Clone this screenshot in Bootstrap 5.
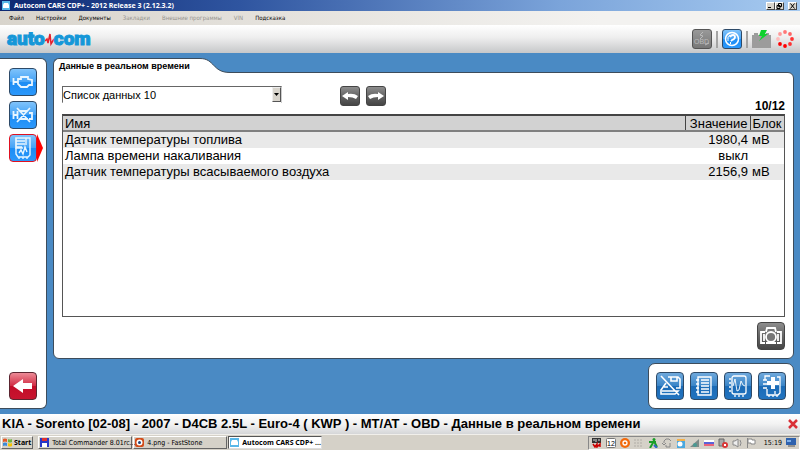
<!DOCTYPE html>
<html lang="ru">
<head>
<meta charset="utf-8">
<meta name="viewport" content="width=device-width, initial-scale=1">
<title>Autocom CARS CDP+</title>
<link href="https://cdn.jsdelivr.net/npm/bootstrap@5.3.0/dist/css/bootstrap.min.css" rel="stylesheet">
<style>
body{font-family:"Liberation Sans",sans-serif;font-size:12px;line-height:16px;color:#000;background:#4a8ac4}
button{padding:0;border:0;background:none;color:inherit}
svg{display:block;flex:none}
.ui-font{font-family:"DejaVu Sans Condensed","Noto Sans",sans-serif}
.ui-bold{font-family:"Noto Sans",sans-serif;font-weight:700}
.titlebar{height:11px;background:linear-gradient(90deg,#0d2871,#2f55a0 30%,#7ba4da 70%,#a6caf0);color:#fff;font-size:7px;line-height:11px;padding:0 3px 0 2px}
.win-btn{width:9px;height:8px;background:#d8d4cc;border:1px solid;border-color:#fff #444 #444 #fff}
.menubar{height:14px;background:linear-gradient(90deg,#d8d4cc,#f3f2f0 75%);font-size:6px;line-height:14px;padding-left:9px;gap:12px}
.menubar button:disabled{color:#96938e}
.toolbar{height:28px;background:linear-gradient(#fff,#eee 45%,#c6c7c9);padding:0 6px 0 7px}
.logo{font-family:"Roboto",sans-serif;font-weight:900;font-size:19px;line-height:26px;color:#1597d8;-webkit-text-stroke:1px #1597d8}
.rule{width:2px;height:17px;background:#a4a4a4}
.work{padding:5px 6px 5px 0;gap:6px}
.side{flex:none;width:47px;background:#fff;border:1px solid #3d4c5b;border-left:0;border-radius:0 6px 6px 0;padding:9px 0 8px 9px;gap:5px}
.tile{flex:none;width:28px;height:28px;border:1px solid #2d4a68;border-radius:4px;display:flex;align-items:center;justify-content:center;background:linear-gradient(#7fc3fb,#45a3f6 48%,#1c8df4 52%,#2b98fb)}
.tile-dark{background:linear-gradient(#6fa9dc,#3c86c8 48%,#1b6bb6 52%,#2274c0)}
.tile-grey{background:linear-gradient(#8d8d8d,#666 48%,#454545);border-color:#444}
.tile-off{background:linear-gradient(#999,#777);border-color:#555}
.tile-red{background:linear-gradient(#ec8a96,#d22f46 48%,#c20d28 52%,#c8142f);border-color:#5b2530}
.tile-on{border-color:#e01020}
.tile-sm{width:20px;height:20px;border-radius:3px}
.pointer{width:6px;height:28px;background:#f00;clip-path:polygon(0 0,100% 50%,0 100%)}
.tab-label{height:15px;background:#fff;border:1px solid #3d4c5b;border-width:1px 0 0 1px;border-radius:6px 0 0 0;width:147px;padding-left:5px;font-size:9px;line-height:14px;font-weight:700;white-space:nowrap}
.tab-row{margin-bottom:-1px;position:relative}
.sheet{background:#fff;border:1px solid #3d4c5b;border-radius:0 6px 6px 6px;padding:13px 8px 8px}
.panel-top{height:28px}
.pick{width:220px;height:17px;border:1px solid #777;border-color:#666 #ccc #ccc #666;position:relative}
.pick select{width:100%;height:15px;border:0;padding:0;font-size:11px;line-height:15px;appearance:none;background:#fff;color:#000}
.pick-arrow{position:absolute;right:0;top:0;bottom:0;width:9px;background:#d8d4cc;border:1px solid;border-color:#eee #555 #555 #eee;pointer-events:none}
.steps{gap:6px;margin-left:58px}
.grid-box{border:1px solid #555;border-top:2px solid #444}
.data{width:100%;table-layout:fixed;border-collapse:collapse;font-size:13px}
.data th{height:15px;line-height:13px;font-weight:400;background:#d2d2d2;border-bottom:2px solid #808080;padding:0 2px}
.data th+th{border-left:1px solid #444}
.data td{height:16px;line-height:16px;padding:0 2px}
.data tbody tr:nth-child(odd){background:#e9e9e9}
.c-val{width:65px}.c-unit{width:34px}
.snap{padding-top:5px}
.dock{background:#fff;border:1px solid #3d4c5b;border-radius:7px;padding:8px 7px;gap:6px}
.statusline{height:20px;background:linear-gradient(#fff,#f2f2f2 50%,#d5d6d8);font-size:13px;line-height:20px;font-weight:700;padding:0 2px}
.taskbar{height:16px;background:#d5d1c8;border-top:1px solid #f1efeb;font-size:7px;line-height:12px;gap:1px;padding:1px 0 1px 1px}
.task{height:13px;border:1px solid;border-color:#fff #666 #666 #fff;gap:2px;padding:0 1px;white-space:nowrap}
.task-w{width:94px;gap:3px}
.task-on{background:#fff;border-color:#555 #ddd #ddd #555}
.tray{border:1px solid;border-color:#888 #fff #fff #888;padding:0 3px;gap:4px}
</style>
<script src="https://cdn.jsdelivr.net/npm/bootstrap@5.3.0/dist/js/bootstrap.bundle.min.js"></script>
</head>
<body class="d-flex flex-column min-vh-100">
<header>
 <div class="titlebar d-flex align-items-center">
  <svg width="8" height="9" viewBox="0 0 8 9"><rect width="8" height="9" fill="#58b7e8"/><path d="M1 4l1-2h4l1 2v3H1z" fill="#fff"/></svg>
  <span class="ui-bold ps-1 flex-grow-1">Autocom CARS CDP+ - 2012 Release 3 (2.12.3.2)</span>
  <button class="win-btn" aria-label="Свернуть"><svg width="7" height="6"><path d="M1 4.500h3" stroke="#000"/></svg></button>
  <button class="win-btn me-1" aria-label="Развернуть"><svg width="7" height="6"><path d="M2.500 .5h3v3h-3zM1 2.500h3v3h-3z" stroke="#000" fill="none"/></svg></button>
  <button class="win-btn" aria-label="Закрыть"><svg width="7" height="6"><path d="M1.500 .5l4 5m0-5l-4 5" stroke="#000"/></svg></button>
 </div>
 <nav class="menubar ui-font d-flex"><button>Файл</button><button>Настройки</button><button>Документы</button><button disabled>Закладки</button><button disabled>Внешние программы</button><button disabled>VIN</button><button>Подсказка</button></nav>
 <div class="toolbar d-flex align-items-center">
  <div class="logo d-flex align-items-center me-auto"><span>auto</span><svg width="9" height="15" viewBox="0 0 9 15"><path d="M0 9l2-2 1 4 2-9 1 10 3-5" fill="none" stroke="#e6202c" stroke-width="1.500"/></svg><span>com</span></div>
  <div class="d-flex align-items-center gap-1">
   <button class="tile tile-sm tile-off" aria-label="OBD" disabled><svg width="18" height="18" viewBox="0 0 18 18" fill="none" stroke="#bbb"><path d="M10 2L7 5l3 1-3 3M12 15l4-2"/><text x="1" y="14" font-size="7" font-family="Liberation Sans" fill="#bbb" stroke="none">OBD</text></svg></button>
   <span class="rule"></span>
   <button class="tile tile-sm" aria-label="Справка"><svg width="18" height="18" viewBox="0 0 18 18" fill="none" stroke="#fff"><circle cx="9" cy="9" r="6.500" stroke-width="1.500"/><path d="M7 7q1-2 3-2t2 2-3 3l-1 1M7 13h1" stroke-width="1.800"/><path d="M5 11q-1-4 2-6"/></svg></button>
   <span class="rule"></span>
   <svg width="20" height="19" viewBox="0 0 20 19"><path d="M0 5h2V3h4v2h8V3h3v2h2v13H0z" fill="#9c9c9c"/><path d="M9 0h6l-2 4h3l-9 7 3-5H7z" fill="#0ed12c"/></svg>
   <svg width="18" height="18" viewBox="0 0 18 18" fill="#f33"><circle cx="9" cy="2" r="1.900" fill="#f77"/><circle cx="14" cy="4" r="1.900" fill="#f66"/><circle cx="16" cy="9" r="1.900"/><circle cx="14" cy="14" r="1.900"/><circle cx="9" cy="16" r="1.900" fill="#f00"/><circle cx="4" cy="14" r="1.900" fill="#f00"/><circle cx="2" cy="9" r="1.900" fill="#fbb"/><circle cx="4" cy="4" r="1.900" fill="#f99"/></svg>
  </div>
 </div>
</header>
<main class="work d-flex flex-grow-1">
 <aside class="side d-flex flex-column">
  <button class="tile" aria-label="Двигатель"><svg width="22" height="16" viewBox="0 0 22 16" fill="none" stroke="#e8f6ff" stroke-width="1.800"><path d="M1.500 4v7M1.500 8h4M6 5h3V3h7v2l4 1v5h-3l-2 2H9l-3-3z"/></svg></button>
  <button class="tile" aria-label="Сброс ошибок"><svg width="22" height="16" viewBox="0 0 22 16" fill="none" stroke="#e8f6ff" stroke-width="1.800"><path d="M1.500 4v8M1.500 8h4V4M5.500 8v4M8 4h8M8 12h8M17 6h3v6h-3M5 1l13 14M18 1L5 15"/></svg></button>
  <div class="d-flex"><button class="tile tile-on" aria-label="Данные"><svg width="20" height="24" viewBox="0 0 20 24" fill="none" stroke="#e8f6ff" stroke-width="1.400"><path d="M13 2H3v10h7M3 5h9M3 8h9M3 11h6" stroke-width="1.700"/><path d="M13 2h4v17l-2 2H5l-2-3v-6M6 17l2-3 2 4 2-7 2 5M6 21v2M10 21v2M14 21v2M13 2v7"/></svg></button><span class="pointer"></span></div>
  <button class="tile tile-red mt-auto" aria-label="Назад"><svg width="24" height="20" viewBox="0 0 24 20"><path d="M2 10l10-7v4h9v6h-9v4z" fill="#fff"/></svg></button>
 </aside>
 <div class="d-flex flex-column flex-grow-1 gap-1">
  <section class="d-flex flex-column flex-grow-1">
   <div class="tab-row d-flex"><div class="tab-label">Данные в реальном времени</div><svg width="30" height="15" viewBox="0 0 30 15"><path d="M0 .5C15 .5 12 14.500 30 14.500V15H0z" fill="#fff"/><path d="M0 .5C15 .5 12 14.500 30 14.500" fill="none" stroke="#3d4c5b"/></svg></div>
   <div class="sheet d-flex flex-column flex-grow-1">
    <div class="panel-top d-flex align-items-start">
     <div class="pick"><select aria-label="Список данных"><option>Список данных 10</option></select><span class="pick-arrow"><svg width="7" height="13"><path d="M1 5h5L3.500 8z"/></svg></span></div>
     <div class="steps d-flex"><button class="tile tile-sm tile-grey" aria-label="Назад по списку"><svg width="18" height="12" viewBox="0 0 18 12"><path d="M1 6l6-4v2q6-1 10 2l-2 3q-3-2-8-2v3z" fill="#fff"/></svg></button>
     <button class="tile tile-sm tile-grey" aria-label="Вперёд по списку"><svg width="18" height="12" viewBox="0 0 18 12"><path d="M17 6l-6-4v2Q5 3 1 6l2 3q3-2 8-2v3z" fill="#fff"/></svg></button></div>
     <b class="ms-auto align-self-end">10/12</b>
    </div>
    <div class="grid-box flex-grow-1">
     <table class="data"><colgroup><col><col class="c-val"><col class="c-unit"></colgroup>
      <thead><tr><th>Имя</th><th class="text-end">Значение</th><th>Блок</th></tr></thead>
      <tbody><tr><td>Датчик температуры топлива</td><td class="text-end">1980,4</td><td>мВ</td></tr><tr><td>Лампа времени накаливания</td><td class="text-end">выкл</td><td></td></tr><tr><td>Датчик температуры всасываемого воздуха</td><td class="text-end">2156,9</td><td>мВ</td></tr></tbody>
     </table>
    </div>
    <div class="snap d-flex justify-content-end"><button class="tile tile-grey" aria-label="Снимок"><svg width="24" height="20" viewBox="0 0 24 20" fill="none" stroke="#fff" stroke-width="1.800"><path d="M7 6l1-4h8l1 4M6 6H2v11h4M18 6h4v11h-4M7 17h10"/><circle cx="12" cy="11" r="5" fill="#777"/><path d="M5 8v7M19 8v7"/></svg></button></div>
   </div>
  </section>
  <div class="dock d-flex align-self-end">
   <button class="tile tile-dark" aria-label="Сохранить и печать"><svg width="24" height="22" viewBox="0 0 24 22" fill="none" stroke="#fff" stroke-width="1.600"><path d="M10 2h10l2 2v9h-4M13 2v4h6V2M8 8l-5 7v4h14l3-3H4M6 12h4M3 1l18 19"/></svg></button>
   <button class="tile tile-dark" aria-label="Список"><svg width="20" height="22" viewBox="0 0 20 22" fill="none" stroke="#fff" stroke-width="1.400"><path d="M4 2h13v18H4zM2 5h3M2 9h3M2 13h3M2 17h3M7 5h8M7 8h8M7 11h8M7 14h8M7 17h8"/></svg></button>
   <button class="tile tile-dark" aria-label="График"><svg width="22" height="24" viewBox="0 0 22 24" fill="none" stroke="#fff" stroke-width="1.300"><rect x="5" y="2" width="14" height="18" rx="2"/><path d="M2 5h2M2 9h2M2 13h2M2 17h2M8 21v2M12 21v2M16 21v2"/><path d="M6 12l2-7 2 12 2-1 2-9 2 4 2 1" stroke-width=".9"/></svg></button>
   <button class="tile tile-dark" aria-label="Добавить"><svg width="22" height="24" viewBox="0 0 22 24" fill="none" stroke="#fff" stroke-width="1.300"><path d="M9 2H4v4M16 3h3v16l-2 2H6v-6M2 6h4M2 10h4M2 14h4M8 21v2M12 21v2M16 21v2M14 17v3"/><path d="M10 3h4v4h4v4h-4v4h-4v-4H6V7h4z" fill="#fff" stroke="none"/></svg></button>
  </div>
 </div>
</main>
<footer>
 <div class="statusline d-flex align-items-center"><span class="me-auto">KIA - Sorento [02-08] - 2007 - D4CB 2.5L - Euro-4 ( KWP ) - MT/AT - OBD - Данные в реальном времени</span><button aria-label="Закрыть сеанс"><svg width="10" height="10" viewBox="0 0 10 10"><path d="M1 1l8 8M9 1L1 9" stroke="#d92f36" stroke-width="2.500"/></svg></button></div>
 <div class="taskbar ui-font d-flex align-items-center">
  <button class="task ui-bold d-flex align-items-center me-1"><svg width="9" height="9" viewBox="0 0 9 9"><path d="M0 1q2-1 4 0v3Q2 3 0 4z" fill="#e65a28"/><path d="M5 1q2 1 4 0v3q-2 1-4 0z" fill="#6db33f"/><path d="M0 5q2-1 4 0v3q-2-1-4 0z" fill="#3b8ad8"/><path d="M5 5q2 1 4 0v3q-2 1-4 0z" fill="#f5c400"/></svg>Start</button>
  <button class="task task-w d-flex align-items-center"><svg width="9" height="9" viewBox="0 0 9 9"><rect width="9" height="9" fill="#2838c8"/><path d="M2 0h5v3H2z" fill="#d33"/><path d="M2 5h5v4H2z" fill="#fff"/></svg>Total Commander 8.01rc...</button>
  <button class="task task-w d-flex align-items-center"><svg width="9" height="9" viewBox="0 0 9 9"><rect width="9" height="9" rx="2" fill="#d14b18"/><circle cx="4.500" cy="4.500" r="3" fill="#fff"/><circle cx="4.500" cy="4.500" r="1.500" fill="#247"/></svg>4.png - FastStone</button>
  <button class="task task-w task-on ui-bold d-flex align-items-center"><svg width="9" height="9" viewBox="0 0 9 9"><rect width="9" height="9" fill="#58b7e8"/><path d="M1 4l1-2h5l1 2v3H1z" fill="#fff"/></svg>Autocom CARS CDP+ ...</button>
  <div class="tray d-flex align-items-center ms-auto">
   <svg width="10" height="10" viewBox="0 0 10 10"><path d="M0 0h9v5H0z" fill="#333"/><path d="M1 2h2M4 1v3M6 2h2" stroke="#ddd"/><path d="M1 6l2 3 2-3v3l3-3v3" stroke="#c00" fill="none" stroke-width="1.500"/></svg>
   <svg width="10" height="10" viewBox="0 0 10 10"><rect x=".5" y=".5" width="9" height="9" rx="1" fill="#fff" stroke="#777"/><text x="1" y="8" font-size="7" font-family="Liberation Sans">12</text></svg>
   <svg width="10" height="10" viewBox="0 0 10 10"><circle cx="5" cy="5" r="5" fill="#f26a0c"/><circle cx="5" cy="5" r="2" fill="none" stroke="#fff" stroke-width="1.300"/></svg>
   <svg width="10" height="10" viewBox="0 0 10 10"><path d="M0 2h9M0 5h9M0 8h9" stroke="#c3bfb7" stroke-dasharray="2 1" stroke-width="2"/></svg>
   <svg width="10" height="10" viewBox="0 0 10 10"><path d="M2 10l4-7 3 6M1 4h7" fill="none" stroke="#1a9e28" stroke-width="2"/><circle cx="6" cy="1.500" r="1.500" fill="#1a9e28"/><path d="M6 7l3 3" stroke="#36c" stroke-width="2"/></svg>
   <svg width="10" height="10" viewBox="0 0 10 10" fill="none" stroke="#888"><path d="M2 5V3l2-2h3l2 2M4 5L2 7 0 5M8 5v4H4V7"/></svg>
   <svg width="10" height="10" viewBox="0 0 10 10"><rect x="1" y="1" width="8" height="9" fill="#4aa8df"/><circle cx="4" cy="6" r="2.500" fill="#fff"/><path d="M1 1h8v2H1z" fill="#f4b04a"/></svg>
   <svg width="10" height="10" viewBox="0 0 10 10"><path d="M0 9l9-8v8z" fill="#7d8b88"/><circle cx="5" cy="7" r="2" fill="#4a9a92"/></svg>
   <svg width="10" height="10" viewBox="0 0 10 10"><path d="M0 2h10v2H0z" fill="#fff"/><path d="M0 4h10v2H0z" fill="#5a62d8"/><path d="M0 6h10v2H0z" fill="#e9637a"/></svg>
   <svg width="10" height="10" viewBox="0 0 10 10"><path d="M1 1h5v7H1z" fill="#aaa" stroke="#666"/><circle cx="7" cy="7" r="3" fill="#d93838"/><path d="M6 6l2 2m0-2L6 8" stroke="#fff"/></svg>
   <svg width="10" height="10" viewBox="0 0 10 10" fill="#eee" stroke="#888"><path d="M1 3h2l3-2v8L3 7H1zM8 2q2 3 0 6"/></svg>
   <svg width="10" height="10" viewBox="0 0 10 10" fill="#fff" stroke="#888"><path d="M1.500 0v10M2 1h4v1h3v4H5V5H2z"/></svg>
   <span class="ms-1">15:19</span>
   <svg width="10" height="9" viewBox="0 0 10 9"><rect width="10" height="7" fill="#2f62ae"/><path d="M2 8h7" stroke="#555"/><path d="M1 2h4v2H1z" fill="#7eb0ea"/></svg>
  </div>
 </div>
</footer>
</body>
</html>
